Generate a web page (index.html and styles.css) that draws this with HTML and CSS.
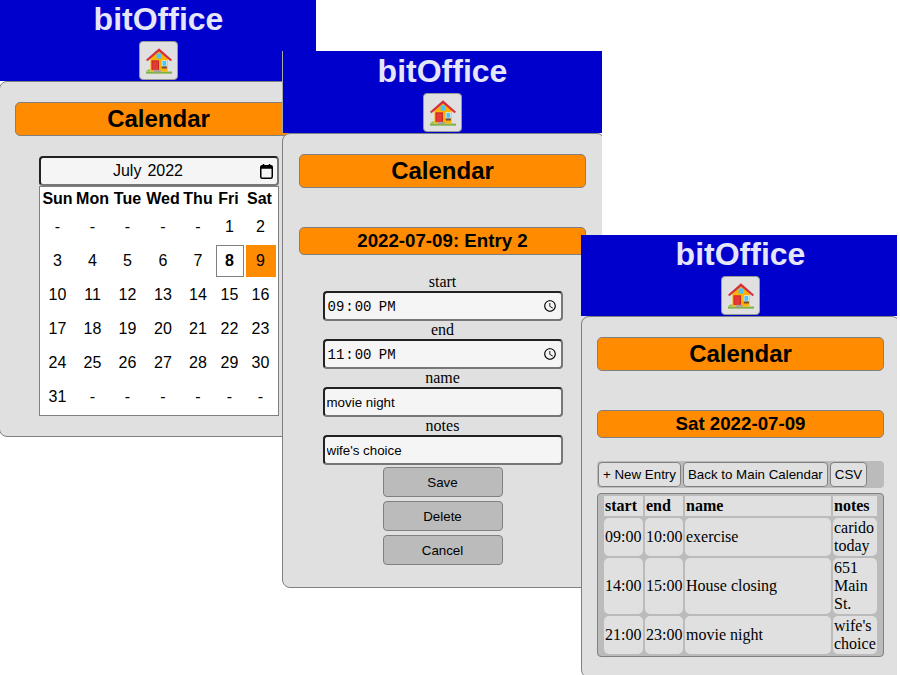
FILE: index.html
```html
<!DOCTYPE html>
<html lang="en">
<head>
    <meta charset="UTF-8">
    <title>bitOffice Calendar</title>
    <link rel="stylesheet" href="styles.css">
</head>
<body>

    <svg class="defs" width="0" height="0">
        <symbol id="house" viewBox="0 0 76 76">
            <rect x="0" y="69" width="76" height="6" fill="#7cb342"/>
            <path d="M0 69 L6 63 H13 V69 Z" fill="#8bc34a"/>
            <path d="M38 8 L63 30 V69 H13 V30 Z" fill="#ffb300"/>
            <path d="M38 1 L76 34 L72 39 L38 10 L4 39 L0 34 Z" fill="#d32f3f"/>
            <rect x="16" y="36" width="22" height="28" fill="#c62828"/>
            <rect x="19" y="39" width="16" height="25" fill="#e53935"/>
            <rect x="46" y="36" width="15" height="18" fill="#e1f5fe"/>
            <path d="M48 38 H59 V52 H48 Z" fill="#4fc3f7"/>
            <rect x="46" y="54" width="15" height="6" fill="#6d4c41"/>
            <rect x="31" y="16" width="14" height="15" fill="#4fc3f7"/>
            <rect x="23" y="64" width="20" height="7" fill="#a8a29a"/>
        </symbol>
    </svg>

    <!-- month view -->
    <div class="window window-month">
        <div class="banner">
            <h1>bitOffice</h1>
            <button class="home"><svg width="26" height="26"><use href="#house"/></svg></button>
        </div>
        <div class="panel">
            <h2 class="title">Calendar</h2>
            <div class="month-box">
                <div class="month-input">
                    <div class="month-value"><span>July</span><span>2022</span></div>
                    <svg class="month-icon" width="13" height="15" viewBox="0 0 13 15"><rect x="0.750" y="1.750" width="11.500" height="12.500" rx="1.500" fill="none" stroke="#000" stroke-width="1.500"/><rect x="0.750" y="1.750" width="11.500" height="3" fill="#000"/><path d="M3.500 0V2M9.500 0V2" stroke="#000" stroke-width="1.500"/></svg>
                </div>
                <div class="month-grid">
                    <b>Sun</b><b>Mon</b><b>Tue</b><b>Wed</b><b>Thu</b><b>Fri</b><b>Sat</b>
                    <span>-</span><span>-</span><span>-</span><span>-</span><span>-</span><span>1</span><span>2</span>
                    <span>3</span><span>4</span><span>5</span><span>6</span><span>7</span><span class="today">8</span><span class="picked">9</span>
                    <span>10</span><span>11</span><span>12</span><span>13</span><span>14</span><span>15</span><span>16</span>
                    <span>17</span><span>18</span><span>19</span><span>20</span><span>21</span><span>22</span><span>23</span>
                    <span>24</span><span>25</span><span>26</span><span>27</span><span>28</span><span>29</span><span>30</span>
                    <span>31</span><span>-</span><span>-</span><span>-</span><span>-</span><span>-</span><span>-</span>
                </div>
            </div>
        </div>
    </div>

    <!-- entry form -->
    <div class="window window-entry">
        <div class="banner">
            <h1>bitOffice</h1>
            <button class="home"><svg width="26" height="26"><use href="#house"/></svg></button>
        </div>
        <div class="panel">
            <h2 class="title">Calendar</h2>
            <h3 class="subtitle">2022-07-09: Entry 2</h3>
            <form class="entry-form">
                <label>start</label>
                <input class="field mono" type="time" value="21:00">
                <label>end</label>
                <input class="field mono" type="time" value="23:00">
                <label>name</label>
                <input class="field" type="text" value="movie night">
                <label>notes</label>
                <input class="field" type="text" value="wife's choice">
                <button type="button" class="form-btn first">Save</button>
                <button type="button" class="form-btn">Delete</button>
                <button type="button" class="form-btn">Cancel</button>
            </form>
        </div>
    </div>

    <!-- day view -->
    <div class="window window-day">
        <div class="banner">
            <h1>bitOffice</h1>
            <button class="home"><svg width="26" height="26"><use href="#house"/></svg></button>
        </div>
        <div class="panel">
            <h2 class="title">Calendar</h2>
            <h3 class="subtitle">Sat 2022-07-09</h3>
            <div class="toolbar">
                <button>+ New Entry</button>
                <button>Back to Main Calendar</button>
                <button>CSV</button>
            </div>
            <div class="entries-box">
                <table class="entries">
                    <tr><th class="col-time">start</th><th class="col-end">end</th><th class="col-name">name</th><th class="col-notes">notes</th></tr>
                    <tr><td>09:00</td><td>10:00</td><td>exercise</td><td>carido today</td></tr>
                    <tr><td>14:00</td><td>15:00</td><td>House closing</td><td>651 Main St.</td></tr>
                    <tr><td>21:00</td><td>23:00</td><td>movie night</td><td>wife's choice</td></tr>
                </table>
            </div>
        </div>
    </div>

</body>
</html>
```

FILE: styles.css
```css
html, body {
    margin: 0;
    height: 100%;
    overflow: hidden;
    background: white;
}
body {
    position: relative;
    font-family: "Liberation Sans", Arial, sans-serif;
}
.defs {
    position: absolute;
}
.window {
    position: absolute;
    width: 319px;
    overflow: hidden;
    text-align: center;
}
.window-month {
    left: -1px;
    top: 0;
    clip-path: inset(0 2px 0 1px);
}
.window-entry {
    left: 282px;
    top: 51px;
    width: 320px;
}
.window-entry .banner {
    height: 82px;
    padding-top: 2px;
    border-left: 1px solid #aaa;
}
.window-entry .panel {
    margin-right: -3px;
    padding-left: 16px;
    padding-right: 18px;
    padding-bottom: 22px;
}
.window-day {
    left: 581px;
    top: 235px;
    clip-path: inset(0 3px 0 0);
}
.banner {
    background: #0000cd;
    height: 81px;
    box-sizing: border-box;
    padding-top: 1px;
}
.banner h1 {
    margin: 0;
    color: #e6e6fa;
    font-size: 32px;
    line-height: 37px;
}
.home {
    display: flex;
    align-items: center;
    justify-content: center;
    width: 39px;
    height: 39px;
    margin: 3px auto 0;
    padding: 0;
    background: #e0e0e0;
    border: 1px solid #999;
    border-radius: 4px;
}
.panel {
    box-sizing: border-box;
    padding: 20px 15px;
    background: #e0e0e0;
    border: 1px solid #808080;
    border-radius: 8px;
}
.title, .subtitle {
    margin: 0;
    background: #ff8c00;
    border: 1px solid #808080;
    border-radius: 5px;
    color: black;
    font-weight: bold;
}
.title {
    font-size: 24px;
    line-height: 32px;
}
.subtitle {
    margin-top: 39px;
    font-size: 18.72px;
    line-height: 26px;
}

/* month view */
.month-box {
    width: 240px;
    margin: 20px auto 0;
}
.month-input {
    display: flex;
    align-items: center;
    box-sizing: border-box;
    width: 240px;
    height: 30px;
    background: #f5f5f5;
    border: 2px solid;
    border-color: #222 #777 #777 #222;
    border-radius: 4px;
    font-size: 16px;
}
.month-value {
    flex: 1;
    display: flex;
    justify-content: center;
    gap: 6px;
    padding-right: 4px;
}
.month-icon {
    margin-right: 4px;
}
.month-grid {
    display: grid;
    grid-template-columns: 32px 34px 32px 35px 31px 28px 30px;
    grid-template-rows: 21px repeat(6, 32px);
    gap: 2px;
    box-sizing: border-box;
    height: 230px;
    padding: 1px 2px;
    background: white;
    border: 1px solid #808080;
    font-size: 16px;
}
.month-grid b, .month-grid span {
    display: flex;
    align-items: center;
    justify-content: center;
    box-sizing: border-box;
}
.month-grid b:nth-child(n+6) {
    padding-right: 2px;
}
.month-grid .today {
    border: 1px solid #808080;
    font-weight: bold;
}
.month-grid .picked {
    background: #ff8c00;
}

/* entry form */
.entry-form {
    margin-top: 18px;
    font-family: "Liberation Serif", "Times New Roman", serif;
    font-size: 16px;
}
.entry-form label {
    display: block;
    line-height: 18px;
}
.field {
    display: block;
    box-sizing: border-box;
    width: 240px;
    height: 30px;
    margin: 0 auto;
    padding: 1px 2px;
    background: #f5f5f5;
    border: 2px solid;
    border-color: #222 #777 #777 #222;
    border-radius: 4px;
    font: 13.333px "Liberation Sans", Arial, sans-serif;
    text-align: left;
}
.field.mono {
    padding-right: 0;
    font-family: "Liberation Mono", monospace;
    font-size: 14px;
}
.field.mono::-webkit-datetime-edit {
    transform: translateY(1px);
}
.field.mono::-webkit-datetime-edit-ampm-field {
    margin-left: 1px;
}
.form-btn {
    display: block;
    width: 120px;
    height: 30px;
    margin: 4px auto 0;
    background: #bbb;
    border: 1px solid #808080;
    border-radius: 4px;
    font: 13.333px "Liberation Sans", Arial, sans-serif;
    color: black;
}
.form-btn.first {
    margin-top: 2px;
}

/* day view */
.toolbar {
    display: flex;
    gap: 2px;
    margin-top: 23px;
    padding: 1px;
    background: #bbb;
    border-radius: 4px;
}
.toolbar button {
    height: 25px;
    padding: 0 4px;
    background: #e0e0e0;
    border: 1px solid #808080;
    border-radius: 4px;
    font: 13.333px "Liberation Sans", Arial, sans-serif;
    color: black;
}
.entries-box {
    margin-top: 5px;
    padding: 0 4px;
    background: #bbb;
    border: 1px solid #808080;
    border-radius: 4px;
}
.entries {
    table-layout: fixed;
    width: 277px;
    border-spacing: 2px;
    font-family: "Liberation Serif", "Times New Roman", serif;
    font-size: 16px;
    line-height: 18px;
    text-align: left;
}
.entries th, .entries td {
    box-sizing: border-box;
    padding: 1px;
    background: #e0e0e0;
}
.entries td {
    border-radius: 5px;
}
.col-time {
    width: 39px;
}
.col-end {
    width: 38px;
}
.col-notes {
    width: 44px;
}
```
